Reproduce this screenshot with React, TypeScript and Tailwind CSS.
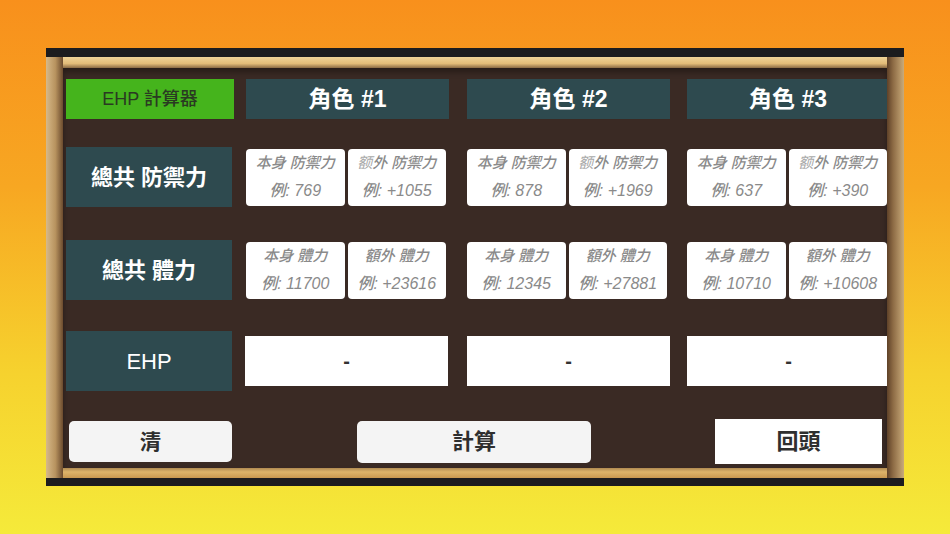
import React from "react";

const font = { fontFamily: '"Liberation Sans", "Noto Sans CJK TC", "Noto Sans", sans-serif' };

type Cell = { a: string; av: string; b: string; bv: string; bLight?: boolean };

const defRow: Cell[] = [
  { a: "本身 防禦力", av: "例: 769", b: "外 防禦力", bv: "例: +1055", bLight: true },
  { a: "本身 防禦力", av: "例: 878", b: "外 防禦力", bv: "例: +1969", bLight: true },
  { a: "本身 防禦力", av: "例: 637", b: "外 防禦力", bv: "例: +390", bLight: true },
];
const hpRow: Cell[] = [
  { a: "本身 體力", av: "例: 11700", b: "額外 體力", bv: "例: +23616" },
  { a: "本身 體力", av: "例: 12345", b: "額外 體力", bv: "例: +27881" },
  { a: "本身 體力", av: "例: 10710", b: "額外 體力", bv: "例: +10608" },
];

function Input({ top, bottom, light }: { top: string; bottom: string; light?: boolean }) {
  return (
    <div className="h-[57px] flex-1 bg-white rounded-[4px] flex flex-col items-center justify-center gap-[8px] text-[#8a8a8a] italic font-medium text-[15px] leading-[20px] whitespace-nowrap overflow-hidden">
      <div>
        {light ? <span className="text-[#a8a8a8] font-normal">额</span> : null}
        {top}
      </div>
      <div className="text-[16px]">{bottom}</div>
    </div>
  );
}

function Label({ children }: { children: React.ReactNode }) {
  return (
    <div className="w-[166px] h-[60px] bg-[#2e4a4f] flex items-center justify-center text-white font-bold text-[22px]">
      {children}
    </div>
  );
}

function InputRow({ label, cells }: { label: string; cells: Cell[] }) {
  const widths = ["w-[221px]", "w-[220px]", "w-[220px]"];
  return (
    <div className="flex items-center">
      <div className="w-[180px] shrink-0">
        <Label>{label}</Label>
      </div>
      {cells.map((c, i) => (
        <div key={i} className={widths[i] + " shrink-0"}>
          <div className="w-[200px] flex gap-[3px]">
            <Input top={c.a} bottom={c.av} />
            <Input top={c.b} bottom={c.bv} light={c.bLight} />
          </div>
        </div>
      ))}
    </div>
  );
}

export default function App() {
  return (
    <div
      className="w-[950px] h-[534px] overflow-hidden bg-[linear-gradient(180deg,#f8901c_0%,#f7a722_35%,#f6d22e_70%,#f5ea3a_100%)] pt-[48px] pl-[46px]"
      style={font}
    >
      <div className="w-[858px] h-[438px] bg-[#1c1c1e] pt-[9px] pb-[8px] flex flex-col">
        <div className="flex-1 flex">
          {/* left gold bar */}
          <div className="w-[17px] shrink-0 bg-[linear-gradient(90deg,#d6b989_0%,#b8935f_55%,#6b4b2e_100%)]" />
          <div className="flex-1 min-w-0 flex flex-col">
            <div className="h-[11px] bg-[linear-gradient(180deg,#f0d498_0%,#e2bb78_60%,#8a6a44_100%)]" />
            <div className="flex-1 bg-[#3a2a24] shadow-[inset_0_4px_6px_rgba(0,0,0,0.35)] pl-[3px] pt-[11px] overflow-visible">
              {/* header */}
              <div className="flex">
                <div className="w-[180px] shrink-0">
                  <div className="w-[168px] h-[40px] bg-[#45b41c] flex items-center justify-center text-[#2a3a22] font-medium text-[18px]">
                    EHP 計算器
                  </div>
                </div>
                {["角色 #1", "角色 #2", "角色 #3"].map((t, i) => (
                  <div key={t} className={(i === 0 ? "w-[221px]" : "w-[220px]") + " shrink-0"}>
                    <div className={(i === 2 ? "w-[202px]" : "w-[203px]") + " h-[40px] bg-[#2e4a4f] flex items-center justify-center text-white font-bold text-[23px]"}>
                      {t}
                    </div>
                  </div>
                ))}
              </div>
              <div className="mt-[28px]">
                <InputRow label="總共 防禦力" cells={defRow} />
              </div>
              <div className="mt-[33px]">
                <InputRow label="總共 體力" cells={hpRow} />
              </div>
              {/* EHP row */}
              <div className="mt-[31px] flex items-center">
                <div className="w-[179px] shrink-0">
                  <div className="w-[166px] h-[60px] bg-[#2e4a4f] flex items-center justify-center text-white font-medium text-[22px]">
                    EHP
                  </div>
                </div>
                {[0, 1, 2].map((i) => (
                  <div key={i} className={(i === 0 ? "w-[222px]" : "w-[220px]") + " shrink-0"}>
                    <div className="w-[203px] h-[50px] bg-white flex items-center justify-center text-[#333] font-bold text-[20px]">
                      -
                    </div>
                  </div>
                ))}
              </div>
              {/* buttons */}
              <div className="mt-[28px] flex items-center">
                <div className="ml-[3px] shrink-0 w-[163px] h-[41px] bg-[#f4f4f4] rounded-[5px] flex items-center justify-center text-[#2f2f2f] font-bold text-[21px]">
                  清
                </div>
                <div className="ml-[125px] shrink-0 w-[234px] h-[42px] bg-[#f4f4f4] rounded-[5px] flex items-center justify-center text-[#2f2f2f] font-bold text-[22px]">
                  計算
                </div>
                <div className="ml-[124px] shrink-0 w-[167px] h-[45px] bg-white flex items-center justify-center text-[#2f2f2f] font-bold text-[22px]">
                  回頭
                </div>
              </div>
            </div>
            <div className="h-[10px] bg-[linear-gradient(180deg,#b08a52_0%,#ddb46a_40%,#c89850_100%)]" />
          </div>
          {/* right gold bar */}
          <div className="w-[17px] shrink-0 bg-[linear-gradient(90deg,#5e4128_0%,#8c6a44_35%,#c9ab7a_100%)]" />
        </div>
      </div>
    </div>
  );
}
